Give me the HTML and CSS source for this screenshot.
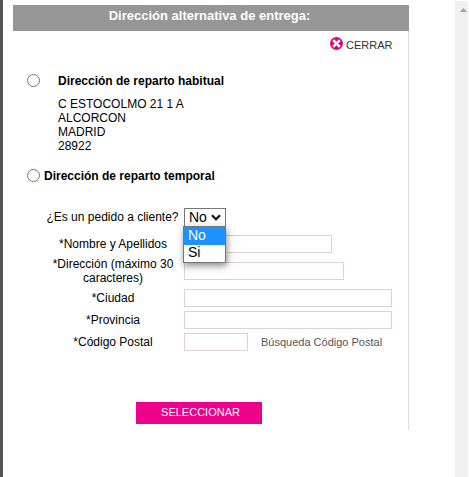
FILE: index.html
```html
<!DOCTYPE html>
<html lang="es">
<head>
<meta charset="utf-8">
<title>Dirección alternativa de entrega</title>
<link rel="stylesheet" href="styles.css">
</head>
<body>
<div class="page">
  <main class="panel">
    <h1 class="title">Dirección alternativa de entrega:</h1>
    <div class="content">
      <div class="close">
        <svg width="13" height="13" viewBox="0 0 13 13"><circle cx="6.5" cy="6.5" r="6.5" fill="#e6007e"/><path d="M3.2 3.2l6.6 6.6M9.8 3.2l-6.6 6.6" stroke="#fff" stroke-width="2.5"/></svg>
        <span>CERRAR</span>
      </div>
      <label class="option usual"><span class="radio"></span><b>Dirección de reparto habitual</b></label>
      <address class="address">C ESTOCOLMO 21 1 A<br>ALCORCON<br>MADRID<br>28922</address>
      <label class="option temporary"><span class="radio"></span><b>Dirección de reparto temporal</b></label>
      <div class="form">
        <span class="label question">¿Es un pedido a cliente?</span>
        <div class="select">
          <span>No</span>
          <svg width="10" height="7" viewBox="0 0 10 7"><path d="M1 1.2l4 4 4-4" fill="none" stroke="#111" stroke-width="2.2"/></svg>
          <div class="menu"><div class="item selected">No</div><div class="item">Si</div></div>
        </div>
        <span class="label">*Nombre y Apellidos</span><div class="field w148"></div>
        <span class="label wrap">*Dirección (máximo 30 caracteres)</span><div class="field w160"></div>
        <span class="label">*Ciudad</span><div class="field w208"></div>
        <span class="label">*Provincia</span><div class="field w208"></div>
        <span class="label">*Código Postal</span><div class="row"><div class="field w64"></div><span class="search">Búsqueda Código Postal</span></div>
      </div>
      <div class="submit">SELECCIONAR</div>
    </div>
  </main>
  <div class="scrollbar"><div class="arrow"></div></div>
</div>
</body>
</html>
```
FILE: styles.css
```css
* { box-sizing: border-box; }
body { margin: 0; background: #fff; color: #000; font: 12px/14px "Liberation Sans", Arial, sans-serif; overflow: hidden; }
.page { display: flex; justify-content: space-between; width: 468px; height: 477px; border-left: 3px solid #555; }
.panel { width: 396px; height: 425px; margin: 5px 0 0 10px; }
.title { height: 26px; margin: 0; padding-right: 3px; background: #969696; color: #fff; font-size: 13px; line-height: 22px; font-weight: bold; text-align: center; white-space: nowrap; }
.content { height: 399px; border-right: 1px solid #ddd; display: flex; flex-direction: column; }
.close { display: flex; align-items: flex-start; height: 43px; padding: 6px 0 0 317px; font-size: 11px; color: #333; }
.close span { margin: 1px 0 0 3px; }
.option { display: flex; align-items: center; height: 13px; padding-left: 14px; white-space: nowrap; }
.radio { width: 13px; height: 13px; border: 1px solid #767676; border-radius: 50%; }
.usual b { margin-left: 18px; }
.temporary b { margin-left: 4px; }
.address { font-style: normal; margin: 10px 0 16px 45px; }
.form { display: grid; grid-template-columns: 142px 208px; column-gap: 2px; grid-template-rows: 26px 27px 28px 26px 18px 26px; align-items: center; margin: 22px 0 0 27px; }
.label { text-align: center; padding: 0 3px 0 7px; white-space: nowrap; }
.wrap { white-space: normal; }
.question { padding: 0 0 0 3px; }
.select { position: relative; display: flex; align-items: center; justify-content: space-between; width: 42px; height: 19px; padding: 0 4px; border: 1px solid #767676; background: #fff; font-size: 14px; }
.menu { position: absolute; z-index: 1; left: -2px; top: 17px; width: 43px; height: 37px; border: 1px solid #767676; background: #fff; box-shadow: 1px 3px 7px rgba(0,0,0,.45); }
.item { height: 17px; padding-left: 4px; line-height: 15px; }
.selected { background: #1e90ff; color: #fff; height: 18px; line-height: 17px; }
.field { height: 18px; border: 1px solid #e0d0d0; background: #fff; }
.w64 { width: 64px; }
.w148 { width: 148px; }
.w160 { width: 160px; }
.w208 { width: 208px; }
.row { display: flex; align-items: center; }
.search { margin-left: 13px; font-size: 11px; color: #555; white-space: nowrap; }
.submit { width: 126px; height: 22px; margin: 47px 0 0 123px; padding-left: 3px; background: #ec008c; color: #fff; font-size: 11px; line-height: 21px; text-align: center; }
.scrollbar { width: 13px; height: 476px; margin-top: 1px; padding: 7px 0 0 5px; background: #f0f0f0; }
.arrow { width: 7px; height: 4px; background: #a3a3a3; clip-path: polygon(50% 0, 100% 100%, 0 100%); }
```
